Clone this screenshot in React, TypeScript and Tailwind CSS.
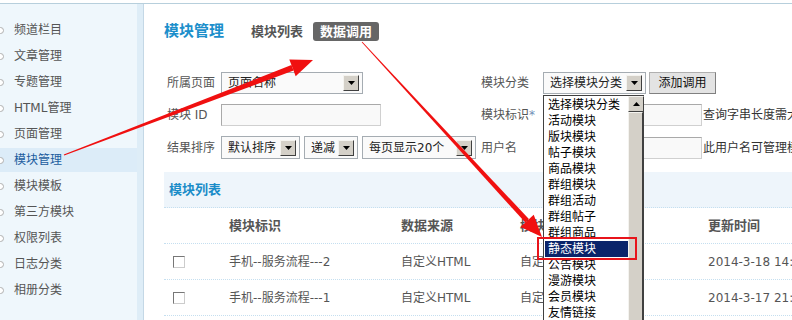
import React from "react";

const menu = [
  "频道栏目",
  "文章管理",
  "专题管理",
  "HTML管理",
  "页面管理",
  "模块管理",
  "模块模板",
  "第三方模块",
  "权限列表",
  "日志分类",
  "相册分类",
];

const options = [
  "选择模块分类",
  "活动模块",
  "版块模块",
  "帖子模块",
  "商品模块",
  "群组模块",
  "群组活动",
  "群组帖子",
  "群组商品",
  "静态模块",
  "公告模块",
  "漫游模块",
  "会员模块",
  "友情链接",
];

const rows = [
  { name: "手机--服务流程---2", source: "自定义HTML", type: "自定义HTML", time: "2014-3-18 14:32:10" },
  { name: "手机--服务流程---1", source: "自定义HTML", type: "自定义HTML", time: "2014-3-17 21:05:44" },
];

function ArrowBtn({ up }: { up?: boolean }) {
  return (
    <span className="flex items-center justify-center w-[16px] h-[16px] shrink-0 bg-[#d4d0c8] border border-t-[#f4f3ef] border-l-[#f4f3ef] border-b-[#404040] border-r-[#404040]">
      <svg width="7" height="4" viewBox="0 0 7 4">
        {up ? <path d="M0 4 L3.5 0 L7 4 Z" fill="#000" /> : <path d="M0 0 L7 0 L3.5 4 Z" fill="#000" />}
      </svg>
    </span>
  );
}

function Select({ text, className }: { text: string; className: string }) {
  return (
    <div className={`flex shrink-0 items-center justify-between border border-[#a5acb2] bg-[#fafafa] pl-[6px] pr-[3px] ${className}`}>
      <span className="text-[12px] text-[#222] whitespace-nowrap">{text}</span>
      <ArrowBtn />
    </div>
  );
}

function Input({ className }: { className: string }) {
  return <div className={`shrink-0 h-[22px] border border-[#a9a9a9] border-b-[#d0d0d0] border-r-[#d0d0d0] bg-[#f9f9f9] ${className}`} />;
}

export default function App() {
  return (
    <div className="relative w-[792px] h-[320px] overflow-hidden bg-white pt-[3px] font-['DejaVu_Sans','Noto_Sans_CJK_SC',sans-serif]">
      <div className="flex h-full border-t border-[#b7cfdc]">
        {/* 侧栏 */}
        <aside className="w-[137px] shrink-0 bg-[#eff7fc] pt-[14px]">
          {menu.map((m) => {
            const active = m === "模块管理";
            return (
              <div
                key={m}
                className={`flex items-center h-[24px] mb-[2px] ${active ? "bg-[#dcecf8] text-[#1b5c9e]" : "text-[#555]"}`}
              >
                <span className="w-[7px] h-[7px] -ml-[3px] rounded-full border border-[#b0b0b0] bg-white" />
                <span className="ml-[10px] text-[12px]">{m}</span>
              </div>
            );
          })}
        </aside>
        <div className="w-[7px] shrink-0 bg-[#deedf7] border-r border-[#c4d8e6]" />

        {/* 主区域 */}
        <main className="flex-1 min-w-0 pl-[20px]">
          <div className="flex items-center h-[19px] mt-[18px]">
            <span className="text-[15px] font-bold text-[#1c8fcb]">模块管理</span>
            <span className="ml-[27px] text-[13px] font-bold text-[#555]">模块列表</span>
            <span className="ml-[10px] flex items-center h-[19px] px-[7px] rounded-[3px] bg-[#666] text-[13px] font-bold text-white">
              数据调用
            </span>
          </div>

          {/* 表单 */}
          <div className="pl-[3px] mt-[31px] flex flex-col gap-[10px] text-[12px] text-[#555]">
            <div className="flex items-center h-[22px]">
              <div className="flex shrink-0 items-center w-[314px]">
                <span className="w-[54px] shrink-0">所属页面</span>
                <Select text="页面名称" className="w-[142px] h-[22px]" />
              </div>
              <span className="w-[62px] shrink-0">模块分类</span>
              <Select text="选择模块分类" className="w-[103px] h-[22px]" />
              <button className="shrink-0 ml-[3px] w-[67px] h-[22px] bg-[#e3e3e3] border border-[#b0b0b0] border-b-[#808080] border-r-[#808080] text-[12px] text-[#111]">
                添加调用
              </button>
            </div>
            <div className="flex items-center h-[22px]">
              <div className="flex shrink-0 items-center w-[314px]">
                <span className="w-[54px] shrink-0">模块 ID</span>
                <Input className="w-[160px]" />
              </div>
              <span className="w-[62px] shrink-0">
                模块标识<span className="text-[#7090b8]">*</span>
              </span>
              <Input className="w-[159px]" />
              <span className="ml-[1px] whitespace-nowrap text-[#333]">查询字串长度需大于2个字符</span>
            </div>
            <div className="flex items-center h-[23px]">
              <div className="flex shrink-0 items-center w-[314px] gap-[4px]">
                <span className="w-[50px] shrink-0">结果排序</span>
                <Select text="默认排序" className="w-[79px] h-[23px]" />
                <Select text="递减" className="w-[54px] h-[23px]" />
                <Select text="每页显示20个" className="w-[114px] h-[23px]" />
              </div>
              <span className="w-[62px] shrink-0">用户名</span>
              <Input className="w-[159px]" />
              <span className="ml-[1px] whitespace-nowrap text-[#333]">此用户名可管理模块</span>
            </div>
          </div>

          {/* 列表 */}
          <div className="mt-[13px] flex items-center h-[36px] pl-[5px] bg-[#eef5fb] border-b border-dotted border-[#c5dff0]">
            <span className="text-[13px] font-bold text-[#1a8cc8]">模块列表</span>
          </div>
          <div className="flex items-center h-[36px] border-b border-dotted border-[#c5dff0] text-[13px] font-bold text-[#555] whitespace-nowrap">
            <span className="w-[65px] shrink-0" />
            <span className="w-[172px] shrink-0">模块标识</span>
            <span className="w-[119px] shrink-0">数据来源</span>
            <span className="w-[188px] shrink-0">模块类型</span>
            <span className="shrink-0">更新时间</span>
          </div>
          {rows.map((r) => (
            <div
              key={r.name}
              className="flex items-center h-[36px] border-b border-dotted border-[#c5dff0] text-[12px] text-[#555] whitespace-nowrap"
            >
              <span className="w-[65px] shrink-0 pl-[9px]">
                <span className="block w-[12px] h-[12px] border border-[#777] border-b-[#ccc] border-r-[#ccc] bg-white" />
              </span>
              <span className="w-[172px] shrink-0">{r.name}</span>
              <span className="w-[119px] shrink-0">{r.source}</span>
              <span className="w-[188px] shrink-0">{r.type}</span>
              <span className="shrink-0">{r.time}</span>
            </div>
          ))}
        </main>
      </div>

      {/* 下拉列表 */}
      <div className="absolute left-[543px] top-[95px] w-[101px] h-[240px] flex bg-white border border-[#404040] text-[12px]">
        <div className="flex-1 flex flex-col p-[1px] pr-0">
          {options.map((o) => (
            <div
              key={o}
              className={`h-[16px] leading-[16px] pl-[3px] whitespace-nowrap ${o === "静态模块" ? "bg-[#0a246a] text-white" : "text-black"}`}
            >
              {o}
            </div>
          ))}
        </div>
        <div className="w-[15px] flex flex-col bg-[#d4d0c8]">
          <ArrowBtn up />
          <div className="flex-1 bg-[#d4d0c8] border border-t-[#f4f3ef] border-l-[#f4f3ef] border-b-[#404040] border-r-[#404040]" />
        </div>
      </div>
      <div className="absolute left-[537px] top-[237px] w-[100px] h-[23px] border-2 border-[#e8141b]" />

      {/* 箭头 */}
      <svg className="absolute left-0 top-0 pointer-events-none" width="792" height="320" viewBox="0 0 792 320">
        <polygon points="63.8,154.5 291.4,65.0 293.6,70.6 64.2,155.5" fill="#f01010" />
        <polygon points="289.3,59.4 313,60 295.7,76.2" fill="#f01010" />
        <polygon points="361.7,42.3 362.3,41.7 528.9,219.1 525.3,222.5" fill="#f01010" />
        <polygon points="520.5,226.9 542,237 533.7,214.7" fill="#f01010" />
      </svg>
    </div>
  );
}
